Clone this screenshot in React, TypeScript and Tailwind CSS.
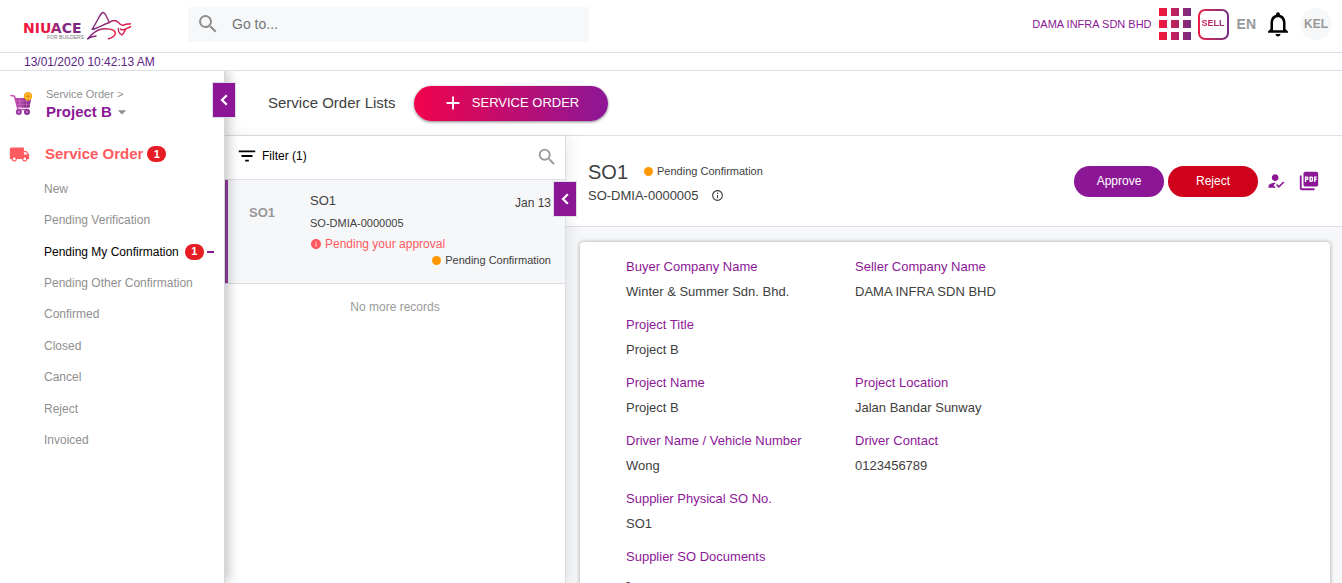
import {
  MdAdd,
  MdArrowDropDown,
  MdFilterList,
  MdHowToReg,
  MdInfo,
  MdInfoOutline,
  MdLocalShipping,
  MdNotificationsNone,
  MdPictureAsPdf,
  MdSearch,
} from "react-icons/md";

type MenuItem = { label: string; count?: number };
type Field = { label: string; value: string };

const menu: MenuItem[] = [
  { label: "New" },
  { label: "Pending Verification" },
  { label: "Pending My Confirmation", count: 1 },
  { label: "Pending Other Confirmation" },
  { label: "Confirmed" },
  { label: "Closed" },
  { label: "Cancel" },
  { label: "Reject" },
  { label: "Invoiced" },
];

const rows: Field[][] = [
  [
    { label: "Buyer Company Name", value: "Winter & Summer Sdn. Bhd." },
    { label: "Seller Company Name", value: "DAMA INFRA SDN BHD" },
  ],
  [{ label: "Project Title", value: "Project B" }],
  [
    { label: "Project Name", value: "Project B" },
    { label: "Project Location", value: "Jalan Bandar Sunway" },
  ],
  [
    { label: "Driver Name / Vehicle Number", value: "Wong" },
    { label: "Driver Contact", value: "0123456789" },
  ],
  [{ label: "Supplier Physical SO No.", value: "SO1" }],
  [{ label: "Supplier SO Documents", value: "-" }],
];

function Logo() {
  return (
    <svg width="112" height="32" viewBox="22 10 112 32" role="img" aria-label="NIUACE for builders">
      <defs>
        <linearGradient id="word" gradientUnits="userSpaceOnUse" x1="24" y1="0" x2="86" y2="0">
          <stop offset="0" stopColor="#f5173c" />
          <stop offset="0.4" stopColor="#e01a45" />
          <stop offset="0.55" stopColor="#8a2a80" />
          <stop offset="1" stopColor="#75297f" />
        </linearGradient>
        <linearGradient id="bull" gradientUnits="userSpaceOnUse" x1="92" y1="0" x2="131" y2="0">
          <stop offset="0" stopColor="#75297f" />
          <stop offset="0.35" stopColor="#8d2a78" />
          <stop offset="1" stopColor="#f5173c" />
        </linearGradient>
        <linearGradient id="back" gradientUnits="userSpaceOnUse" x1="88" y1="0" x2="116" y2="0">
          <stop offset="0" stopColor="#75297f" />
          <stop offset="0.5" stopColor="#a02868" />
          <stop offset="1" stopColor="#f5173c" />
        </linearGradient>
      </defs>
      <text x="23" y="33" fontFamily="DejaVu Sans" fontWeight="700" fontSize="14" fill="url(#word)">
        NIUACE
      </text>
      <text x="47" y="39" fontFamily="Liberation Sans" fontSize="5" fill="#777">
        FOR BUILDERS
      </text>
      <g fill="none" strokeWidth="1.4" strokeLinecap="round" strokeLinejoin="round">
        <path
          stroke="url(#bull)"
          d="M109.500 22.500 C107.500 20 106.500 14 103.500 12.600 C101 11.800 99.500 17 92.200 29.500 C98 28.500 103 24.500 109.500 22.500 C112.500 20 116 20 118.500 22.500 C120.500 25 122.500 26 124.500 24.800 C126.500 23.600 128.500 24.400 130.500 23.800"
        />
        <path stroke="url(#back)" d="M87.800 38.800 C92 33.500 96.500 29.800 102 29 C107 28.300 113.500 29 115.300 32.300 C116 35.500 112 38 108.500 38.800" />
        <path stroke="url(#back)" d="M87.800 38.800 C90 37 93 36.300 96 36" />
        <path
          stroke="url(#bull)"
          d="M118.500 28.500 C118 31 119.500 33.500 121.800 35 C124 34.500 124.300 31 125.800 29 C127.500 27.600 129.500 28 130.500 26.500 M120.500 29 C122 31 124 29.500 125.800 29"
        />
      </g>
    </svg>
  );
}

function Cart() {
  return (
    <svg width="24" height="24" viewBox="0 0 24 24" aria-hidden="true">
      <path d="M1 3.500 L4.500 4.200 L8 17.500 H18" fill="none" stroke="#c44fb5" strokeWidth="1.500" strokeLinecap="round" />
      <path d="M5 6 H21 L19.500 15.500 H7.500 Z" fill="#b044a8" />
      <path d="M12 6 H21 L19.500 15.500 H12 Z" fill="#86308f" />
      <path d="M6 9 H20.500 M7 12.300 H20 M9.500 6 V15.500 M13 6 V15.500 M16.500 6 V15.500" stroke="#d873c8" strokeWidth="0.600" />
      <circle cx="8.800" cy="20" r="3" fill="#9b3ba0" />
      <circle cx="17" cy="20" r="3" fill="#8b2f92" />
      <circle cx="8.800" cy="20" r="0.900" fill="#dc9cda" />
      <circle cx="17" cy="20" r="0.900" fill="#dc9cda" />
      <circle cx="18" cy="4.300" r="4.200" fill="#f9a50d" />
      <circle cx="18" cy="4.300" r="2.900" fill="#ffc640" />
      <path d="M18 2 V6.600 M15.700 4.300 H20.300" stroke="#e58a00" strokeWidth="1.200" />
    </svg>
  );
}

function Collapse({ label }: { label: string }) {
  return (
    <button
      aria-label={label}
      className="absolute top-[11px] -right-3 z-20 flex h-9 w-6 items-center justify-center border border-[#dddfe8] bg-[#8c1796] text-white"
    >
      <svg width="8" height="12" viewBox="0 0 8 12" fill="none" stroke="currentColor" strokeWidth="2.2" aria-hidden="true">
        <path d="M6.800 1.200 L2 6 L6.800 10.800" />
      </svg>
    </button>
  );
}

function Count({ value }: { value: number }) {
  return (
    <span className="flex h-4 w-[19px] items-center justify-center rounded-full bg-[#e71d25] text-[11px] font-bold text-white">
      {value}
    </span>
  );
}

function Status() {
  return (
    <span className="flex items-center gap-1 text-[11px] text-[#404040]">
      <span className="h-[9px] w-[9px] rounded-full bg-[#ff9800]" />
      Pending Confirmation
    </span>
  );
}

export default function App() {
  return (
    <div className="flex h-screen flex-col overflow-hidden bg-white font-['Liberation_Sans',Arial,sans-serif] text-[#404040]">
      <header className="flex h-[53px] shrink-0 items-center border-b border-[#dddfe6] pr-[10px] pb-1 pl-[22px]">
        <a href="#home" className="mt-1 w-[166px] shrink-0">
          <Logo />
        </a>
        <label className="flex h-[35px] w-[401px] items-center gap-3 bg-[#f6f8fa] px-2">
          <MdSearch size={24} className="shrink-0 text-[#8f8f8f]" />
          <input
            aria-label="Go to"
            placeholder="Go to..."
            className="min-w-0 flex-1 bg-transparent text-sm outline-none placeholder:text-[#757575]"
          />
        </label>
        <div className="ml-auto flex items-center">
          <span className="text-[11px] text-[#8c1796]">DAMA INFRA SDN BHD</span>
          <button aria-label="Apps" className="ml-[7px] grid grid-cols-3 gap-1">
            {Array.from({ length: 3 }, (_, row) => [
              <span key={`${row}a`} className="h-2 w-2 bg-linear-to-r from-[#f5173c] to-[#dc1c48]" />,
              <span key={`${row}b`} className="h-2 w-2 bg-linear-to-r from-[#c81f57] to-[#ad2464]" />,
              <span key={`${row}c`} className="h-2 w-2 bg-linear-to-r from-[#942872] to-[#75297f]" />,
            ])}
          </button>
          <button className="ml-[7px] rounded-[7px] bg-linear-to-r from-[#ee1840] to-[#75297f] p-[2px]">
            <span className="flex h-[27px] w-[27px] items-center justify-center rounded-[5px] bg-white">
              <span className="bg-linear-to-r from-[#d81b4a] to-[#8a2878] bg-clip-text text-[9px] font-bold text-transparent">
                SELL
              </span>
            </span>
          </button>
          <button className="ml-2 text-sm font-bold text-[#999]">EN</button>
          <button aria-label="Notifications" className="ml-[7px] text-black">
            <MdNotificationsNone size={30} />
          </button>
          <button className="ml-[7px] flex h-8 w-8 items-center justify-center rounded-full bg-[#f6f7f9] text-xs font-bold text-[#999]">
            KEL
          </button>
        </div>
      </header>
      <div className="flex h-[18px] shrink-0 items-center border-b border-[#dddfe6] pl-6 text-xs text-[#5c2483]">
        13/01/2020 10:42:13 AM
      </div>

      <div className="flex min-h-0 flex-1 overflow-hidden">
        <aside className="relative z-20 w-[225px] shrink-0 border-r border-[#d5d7dd] bg-white shadow-[3px_0_12px_rgba(0,0,0,0.25)]">
          <Collapse label="Collapse menu" />
          <div className="flex items-center gap-3 pt-[15px] pl-[10px]">
            <Cart />
            <div>
              <div className="text-[11px] leading-4 text-[#8f8f8f]">Service Order &gt;</div>
              <button className="flex items-center text-[15px] leading-5 font-bold text-[#8c1796]">
                Project B
                <MdArrowDropDown size={20} className="text-[#8f8f8f]" />
              </button>
            </div>
          </div>
          <nav>
            <a href="#service-order" className="mt-[22px] flex h-5 items-center pl-[9px] text-[15px] font-bold text-[#ff5a5f]">
              <MdLocalShipping size={21} className="mr-[15px]" />
              <span className="mr-1">Service Order</span>
              <Count value={1} />
            </a>
            <ul className="mt-[9px] grid h-[283px] auto-rows-fr pl-11 text-xs">
              {menu.map((item) => (
                <li key={item.label} className="flex items-center">
                  <a
                    href="#list"
                    className={item.count ? "flex items-center gap-[6px] text-black" : "flex items-center text-[#8f8f8f]"}
                  >
                    {item.label}
                    {item.count ? <Count value={item.count} /> : null}
                  </a>
                  {item.count ? <span className="ml-[3px] h-[2px] w-[7px] bg-[#8c1796]" /> : null}
                </li>
              ))}
            </ul>
          </nav>
        </aside>

        <main className="flex min-w-0 flex-1 flex-col">
          <div className="flex h-[65px] shrink-0 items-center border-b border-[#dddfe6] pl-[43px]">
            <h1 className="text-[15px]">Service Order Lists</h1>
            <button className="ml-[18px] flex h-[35px] w-[194px] items-center justify-center gap-2 rounded-full bg-linear-to-r/srgb from-[#f0034c] to-[#8c1796] text-[13px] text-white shadow-[0_1px_3px_rgba(0,0,0,0.5)]">
              <MdAdd size={22} />
              SERVICE ORDER
            </button>
          </div>

          <div className="flex min-h-0 flex-1">
            <section className="relative z-10 w-[341px] shrink-0 border-r border-[#dddfe6] bg-white shadow-[4px_0_12px_rgba(0,0,0,0.08)]">
              <div className="flex h-11 items-center justify-between border-b border-[#dddfe6] pr-[7px] pl-[11px]">
                <button className="flex items-center gap-1 pb-1 text-xs text-black">
                  <MdFilterList size={22} />
                  Filter (1)
                </button>
                <button aria-label="Search orders" className="pb-px text-[#999]">
                  <MdSearch size={22} />
                </button>
              </div>
              <div className="relative">
                <div className="absolute -top-[10px] right-0">
                  <Collapse label="Collapse list" />
                </div>
                <a href="#so1" className="flex h-[104px] border-b border-b-[#dddfe6] bg-[#f6f7f9]">
                  <span className="w-[3px] bg-[#93409c]" />
                  <span className="w-[82px] pt-[25px] pl-[21px] text-[13px] leading-4 font-bold text-[#999]">SO1</span>
                  <span className="flex flex-1 flex-col pr-[14px]">
                    <span className="flex justify-between pt-[13px] text-[13px] leading-4">
                      SO1
                      <span className="pt-[2px] text-xs leading-4">Jan 13</span>
                    </span>
                    <span className="pt-1 text-[11px] leading-4">SO-DMIA-0000005</span>
                    <span className="flex items-center gap-[3px] pt-[5px] text-xs leading-4 text-[#ff5a5f]">
                      <MdInfo size={12} />
                      Pending your approval
                    </span>
                    <span className="self-end leading-4">
                      <Status />
                    </span>
                  </span>
                </a>
              </div>
              <p className="pt-[15px] text-center text-xs leading-4 text-[#999]">No more records</p>
            </section>

            <section className="flex min-w-0 flex-1 flex-col bg-[#f6f7f9]">
              <div className="flex h-[91px] shrink-0 items-center border-b border-[#dddfe6] bg-white pr-[22px] pl-[22px]">
                <div className="pt-[5px]">
                  <div className="flex items-center gap-4">
                    <h2 className="text-xl leading-6">SO1</h2>
                    <Status />
                  </div>
                  <div className="flex items-center gap-3 text-[13px] leading-6">
                    SO-DMIA-0000005
                    <MdInfoOutline size={13} />
                  </div>
                </div>
                <div className="ml-auto flex items-center text-xs text-white">
                  <button className="h-[31px] w-[90px] rounded-full bg-[#8c1796]">Approve</button>
                  <button className="ml-1 h-[31px] w-[90px] rounded-full bg-[#d0021b]">Reject</button>
                  <button aria-label="Assign approver" className="ml-2 text-[#8c1796]">
                    <MdHowToReg size={20} />
                  </button>
                  <button aria-label="Export PDF" className="ml-3 text-[#8c1796]">
                    <MdPictureAsPdf size={22} />
                  </button>
                </div>
              </div>
              <div className="min-h-0 flex-1 overflow-hidden pt-[15px] pr-3 pl-[14px]">
                <dl className="flex flex-col gap-2 rounded-[4px] bg-white px-[46px] py-3 text-[13px] leading-[25px] shadow-[0_0_4px_rgba(0,0,0,0.35)]">
                  {rows.map((row) => (
                    <div key={row[0].label} className="flex">
                      {row.map((field) => (
                        <div key={field.label} className="w-[229px]">
                          <dt className="text-[#8c1796]">{field.label}</dt>
                          <dd>{field.value}</dd>
                        </div>
                      ))}
                    </div>
                  ))}
                </dl>
              </div>
            </section>
          </div>
        </main>
      </div>
    </div>
  );
}
